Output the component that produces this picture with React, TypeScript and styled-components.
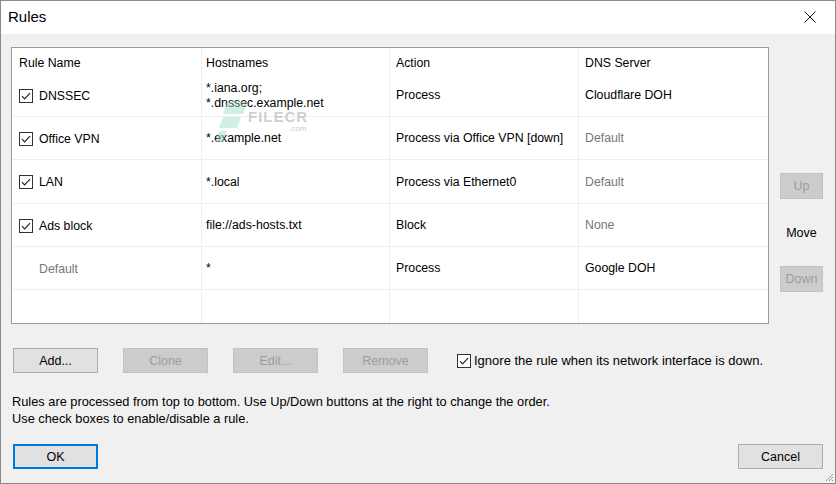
import React from "react";
import styled, { createGlobalStyle } from "styled-components";

const Global = createGlobalStyle`
  html, body { margin: 0; padding: 0; background: #f0f0f0; }
  body { font-family: "Liberation Sans", Arial, sans-serif; font-size: 12px; color: #000; }
  * { box-sizing: border-box; }
`;

const Window = styled.div`
  width: 836px;
  height: 484px;
  border: 1px solid #8a8a8a;
  display: flex;
  flex-direction: column;
  background: #f0f0f0;
  position: relative;
  overflow: hidden;
`;

const TitleBar = styled.div`
  height: 33px;
  background: #fff;
  display: flex;
  align-items: center;
  justify-content: space-between;
  padding: 0 19px 2px 7px;
  flex: none;
`;

const Title = styled.div`
  font-size: 15px;
  color: #000;
`;

const Body = styled.div`
  flex: 1;
  display: flex;
  flex-direction: column;
  padding: 13px 12px 0 10px;
`;

const TopRow = styled.div`
  display: flex;
  height: 277px;
`;

const TableBox = styled.div`
  width: 759px;
  height: 277px;
  border: 1px solid #9a9a9a;
  background: #fff;
  display: flex;
  flex-direction: column;
  position: relative;
  font-size: 12.3px;
`;

const cols = "190px 188px 189px 1fr";

const HeaderRow = styled.div`
  display: grid;
  grid-template-columns: ${cols};
  height: 26px;
  flex: none;
`;

const HeadCell = styled.div<{ $pad: number }>`
  display: flex;
  align-items: center;
  padding-left: ${(p) => p.$pad}px;
  padding-top: 3px;
  border-right: 1px solid #eeeeee;
  &:last-child { border-right: none; }
`;

const Row = styled.div<{ $h: number; $line?: boolean }>`
  display: grid;
  grid-template-columns: ${cols};
  height: ${(p) => p.$h}px;
  flex: none;
  border-bottom: ${(p) => (p.$line ? "1px solid #eeeeee" : "none")};
`;

const Filler = styled.div`
  flex: 1;
  display: grid;
  grid-template-columns: ${cols};
`;

const Cell = styled.div<{ $pad: number; $muted?: boolean }>`
  display: flex;
  flex-direction: column;
  justify-content: center;
  padding-left: ${(p) => p.$pad}px;
  padding-top: 1px;
  border-right: 1px solid #eeeeee;
  color: ${(p) => (p.$muted ? "#777" : "#000")};
  line-height: 15px;
  &:last-child { border-right: none; }
`;

const NameCell = styled.div<{ $muted?: boolean }>`
  display: flex;
  align-items: center;
  gap: 6px;
  padding-left: 7px;
  padding-top: 1px;
  border-right: 1px solid #eeeeee;
  color: ${(p) => (p.$muted ? "#777" : "#000")};
`;

const BoxCheck = styled.span`
  width: 14px;
  height: 14px;
  border: 1px solid #333;
  background: #fff;
  display: inline-flex;
  align-items: center;
  justify-content: center;
  flex: none;
`;

const Spacer = styled.span`
  width: 14px;
  flex: none;
`;

const Check = () => (
  <BoxCheck>
    <svg width="12" height="12" viewBox="0 0 12 12">
      <polyline points="2,6.2 4.6,8.8 10,3.2" fill="none" stroke="#222" strokeWidth="1.2" />
    </svg>
  </BoxCheck>
);

const Side = styled.div`
  width: 54px;
  display: flex;
  flex-direction: column;
  align-items: flex-end;
  padding-top: 126px;
`;

const SmallBtn = styled.div`
  width: 43px;
  height: 26px;
  background: #cccccc;
  border: 1px solid #c2c2c2;
  color: #9d9d9d;
  display: flex;
  align-items: center;
  justify-content: center;
  font-size: 12.5px;
`;

const MoveLabel = styled.div`
  width: 43px;
  height: 67px;
  display: flex;
  align-items: center;
  justify-content: center;
  font-size: 12.5px;
`;

const ActionRow = styled.div`
  display: flex;
  align-items: center;
  margin-top: 24px;
  padding-left: 2px;
  gap: 25px;
`;

const Button = styled.div<{ $disabled?: boolean; $default?: boolean; $w?: number }>`
  width: ${(p) => p.$w ?? 85}px;
  height: 25px;
  display: flex;
  align-items: center;
  justify-content: center;
  font-size: 12.5px;
  background: ${(p) => (p.$disabled ? "#cccccc" : "#e1e1e1")};
  border: 1px solid ${(p) => (p.$default ? "#0078d7" : p.$disabled ? "#c2c2c2" : "#adadad")};
  box-shadow: ${(p) => (p.$default ? "inset 0 0 0 1px #0078d7" : "none")};
  color: ${(p) => (p.$disabled ? "#9d9d9d" : "#000")};
`;

const CheckLabel = styled.div`
  display: flex;
  align-items: center;
  gap: 3px;
  margin-left: 4px;
  font-size: 13px;
`;

const Help = styled.div`
  margin-top: 20px;
  padding-left: 1px;
  line-height: 17px;
  font-size: 12.8px;
`;

const Footer = styled.div`
  display: flex;
  justify-content: space-between;
  margin-top: 17px;
  padding-left: 2px;
`;

const Watermark = styled.div`
  position: absolute;
  left: 203px;
  top: 52px;
  width: 100px;
  height: 44px;
  pointer-events: none;
`;

const WatermarkText = styled.span`
  position: absolute;
  left: 33px;
  top: 9px;
  color: rgba(160, 160, 160, 0.5);
  font-weight: bold;
  font-size: 15px;
  line-height: 15px;
  letter-spacing: 1px;
`;

const WatermarkSmall = styled.span`
  position: absolute;
  left: 74px;
  top: 25px;
  color: rgba(160, 160, 160, 0.6);
  font-size: 8px;
  line-height: 8px;
`;

const Grip = styled.svg`
  position: absolute;
  right: 1px;
  bottom: 1px;
`;

type R = {
  name: string;
  checked: boolean;
  hosts: string[];
  action: string;
  dns: string;
  dnsMuted: boolean;
  h: number;
};

const rows: R[] = [
  { name: "DNSSEC", checked: true, hosts: ["*.iana.org;", "*.dnssec.example.net"], action: "Process", dns: "Cloudflare DOH", dnsMuted: false, h: 43 },
  { name: "Office VPN", checked: true, hosts: ["*.example.net"], action: "Process via Office VPN [down]", dns: "Default", dnsMuted: true, h: 43 },
  { name: "LAN", checked: true, hosts: ["*.local"], action: "Process via Ethernet0", dns: "Default", dnsMuted: true, h: 44 },
  { name: "Ads block", checked: true, hosts: ["file://ads-hosts.txt"], action: "Block", dns: "None", dnsMuted: true, h: 43 },
  { name: "Default", checked: false, hosts: ["*"], action: "Process", dns: "Google DOH", dnsMuted: false, h: 43 },
];

export default function App() {
  return (
    <>
      <Global />
      <Window>
        <TitleBar>
          <Title>Rules</Title>
          <svg width="12" height="12" viewBox="0 0 12 12">
            <path d="M0.5 0.5 L11.5 11.5 M11.5 0.5 L0.5 11.5" stroke="#111" strokeWidth="1" />
          </svg>
        </TitleBar>
        <Body>
          <TopRow>
            <TableBox>
              <HeaderRow>
                <HeadCell $pad={7}>Rule Name</HeadCell>
                <HeadCell $pad={4}>Hostnames</HeadCell>
                <HeadCell $pad={6}>Action</HeadCell>
                <HeadCell $pad={6}>DNS Server</HeadCell>
              </HeaderRow>
              {rows.map((r) => (
                <Row key={r.name} $h={r.h} $line>
                  <NameCell $muted={!r.checked}>
                    {r.checked ? <Check /> : <Spacer />}
                    {r.name}
                  </NameCell>
                  <Cell $pad={4}>
                    {r.hosts.map((h) => (
                      <div key={h}>{h}</div>
                    ))}
                  </Cell>
                  <Cell $pad={6}>{r.action}</Cell>
                  <Cell $pad={6} $muted={r.dnsMuted}>{r.dns}</Cell>
                </Row>
              ))}
              <Filler>
                <Cell $pad={0} />
                <Cell $pad={0} />
                <Cell $pad={0} />
                <Cell $pad={0} />
              </Filler>
              <Watermark>
                <svg width="32" height="44" viewBox="0 0 32 44">
                  <polygon points="12,2 32,2 28,14 8,14" fill="rgba(150,220,190,0.45)" />
                  <polygon points="8,17 26,17 22,28 4,28" fill="rgba(150,220,190,0.45)" />
                  <polygon points="4,31 12,31 8,42 0,42" fill="rgba(150,220,190,0.45)" />
                </svg>
                <WatermarkText>FILECR</WatermarkText>
                <WatermarkSmall>.com</WatermarkSmall>
              </Watermark>
            </TableBox>
            <Side>
              <SmallBtn>Up</SmallBtn>
              <MoveLabel>Move</MoveLabel>
              <SmallBtn>Down</SmallBtn>
            </Side>
          </TopRow>
          <ActionRow>
            <Button>Add...</Button>
            <Button $disabled>Clone</Button>
            <Button $disabled>Edit...</Button>
            <Button $disabled>Remove</Button>
            <CheckLabel>
              <Check />
              Ignore the rule when its network interface is down.
            </CheckLabel>
          </ActionRow>
          <Help>
            <div>Rules are processed from top to bottom. Use Up/Down buttons at the right to change the order.</div>
            <div>Use check boxes to enable/disable a rule.</div>
          </Help>
          <Footer>
            <Button $default>OK</Button>
            <Button>Cancel</Button>
          </Footer>
        </Body>
        <Grip width="10" height="10" viewBox="0 0 10 10">
          <path d="M9 2 L2 9 M9 5 L5 9 M9 8 L8 9" stroke="#999" strokeWidth="1" />
        </Grip>
      </Window>
    </>
  );
}
